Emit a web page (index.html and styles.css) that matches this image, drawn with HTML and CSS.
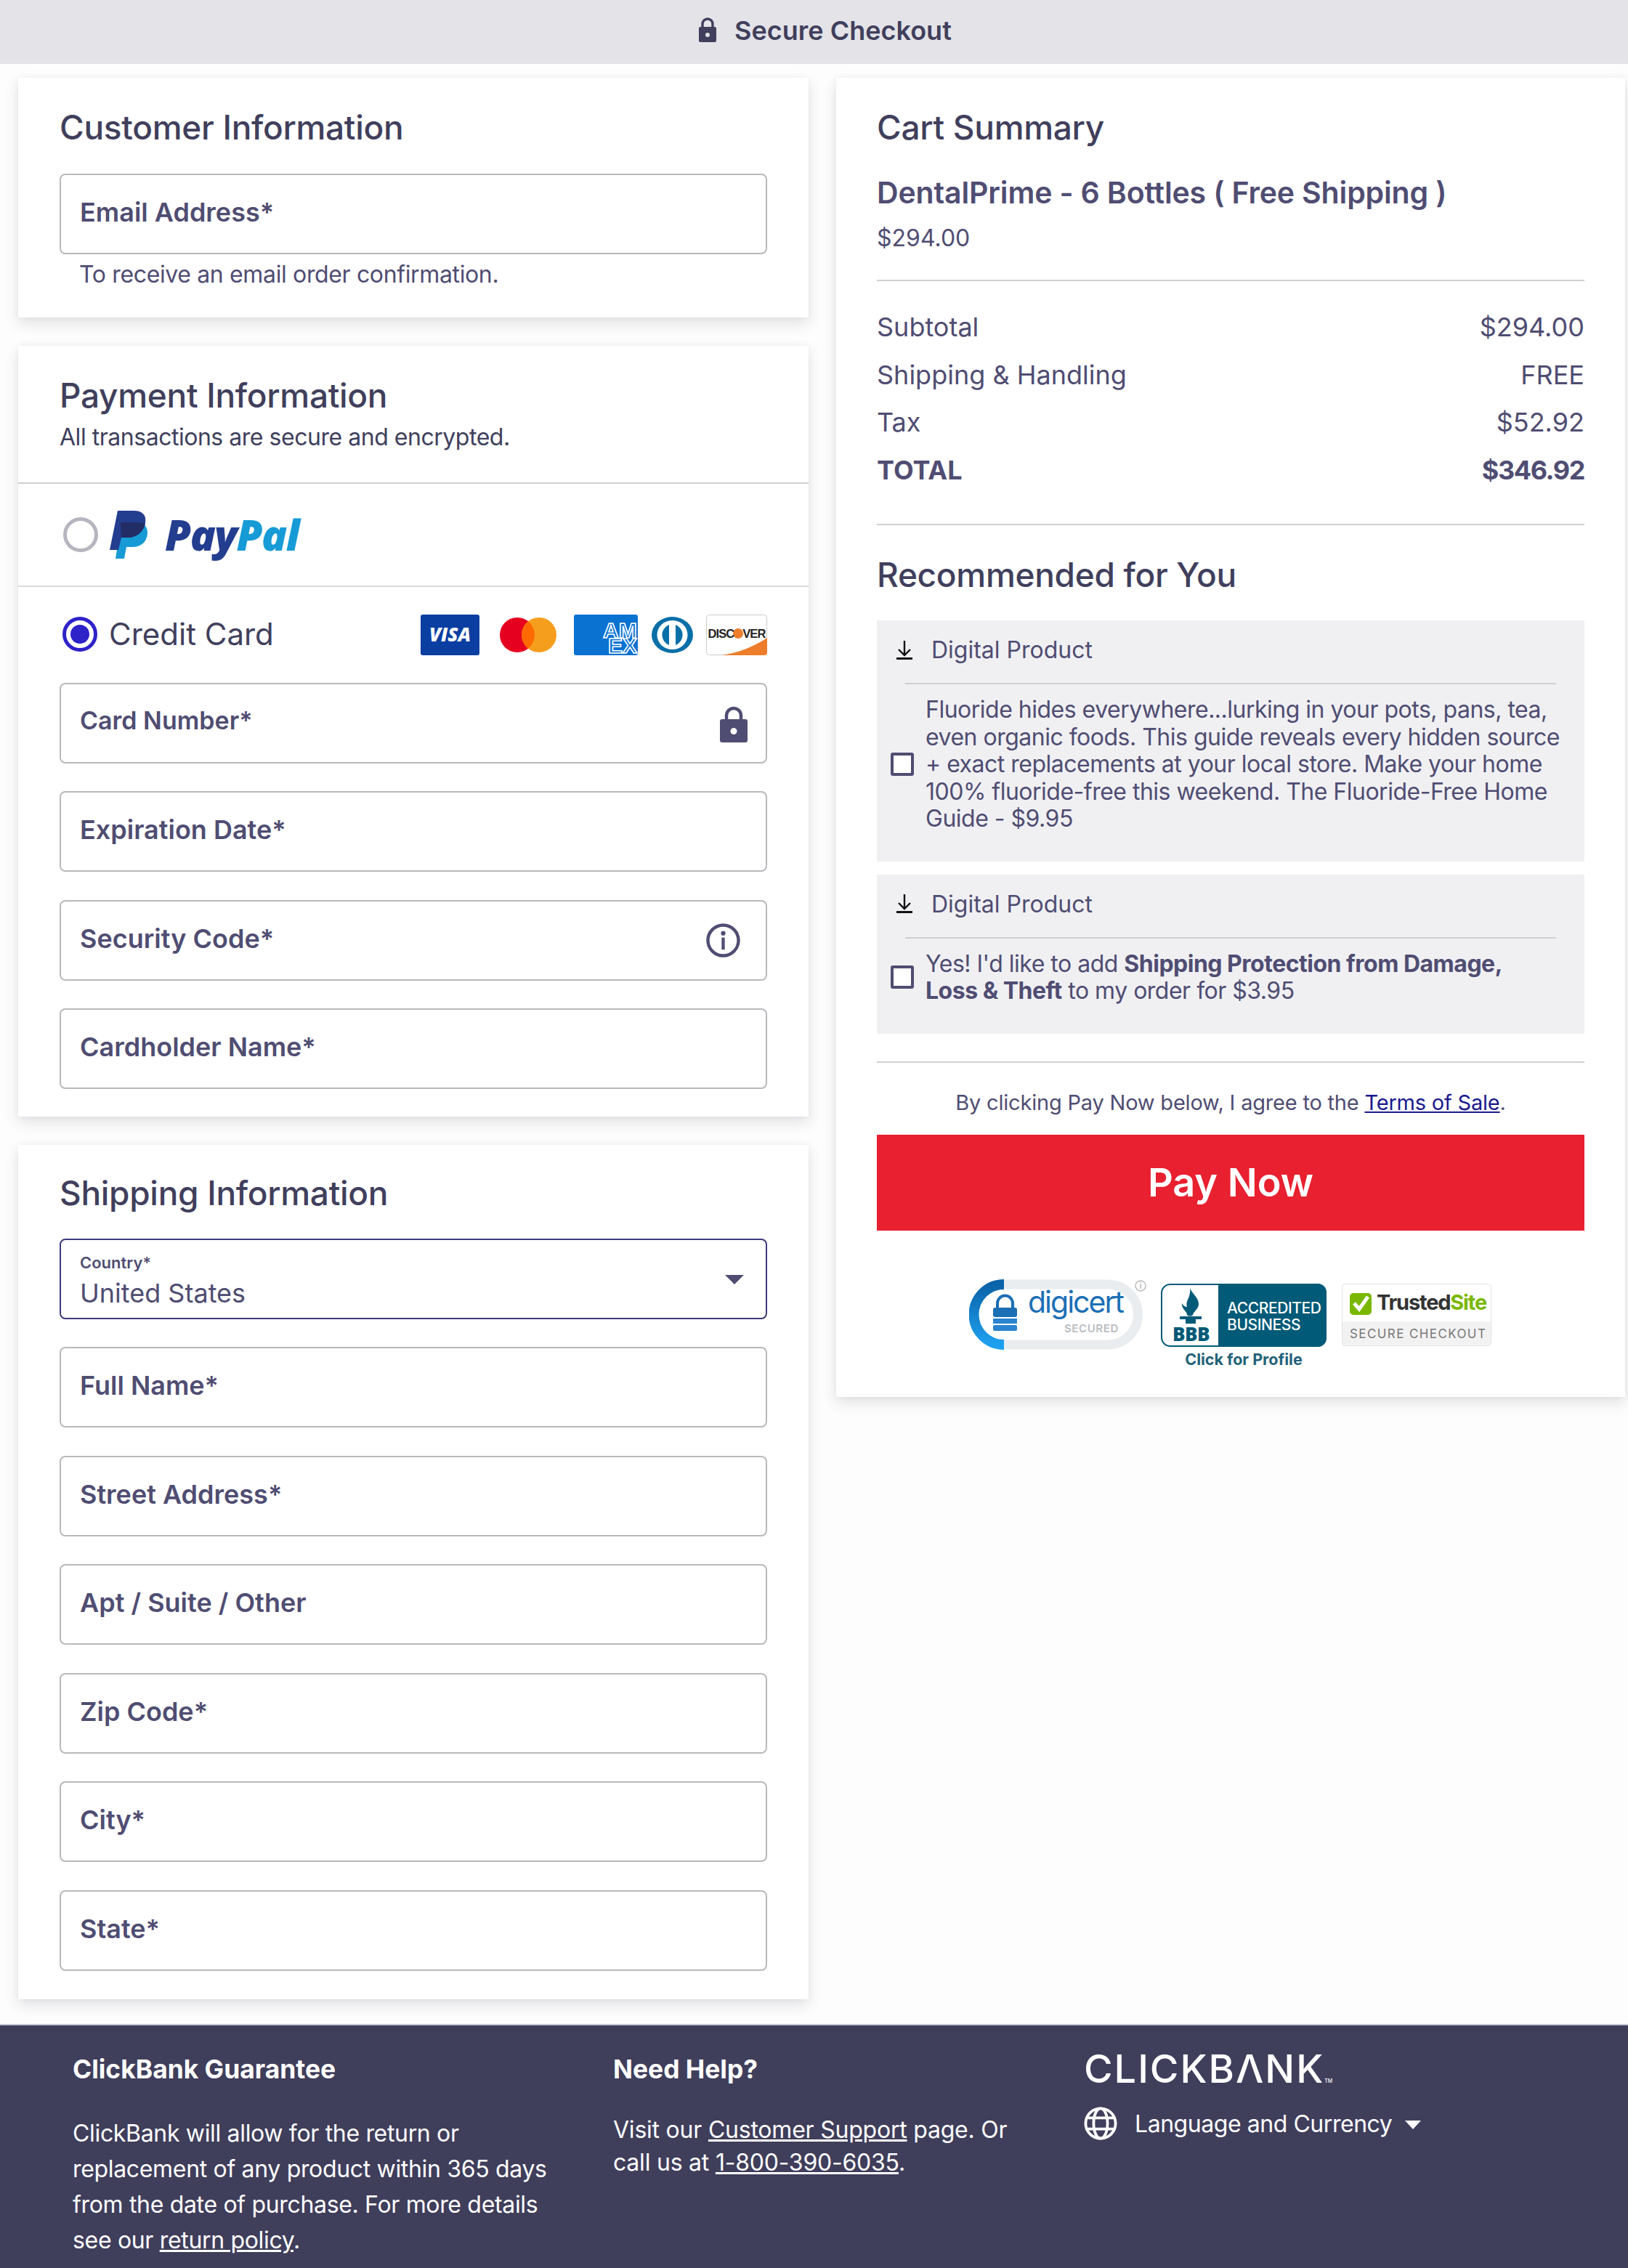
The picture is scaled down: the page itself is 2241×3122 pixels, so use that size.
FILE: index.html
```html
<!DOCTYPE html>
<html lang="en">
<head>
    <meta charset="UTF-8">
    <meta name="viewport" content="width=device-width, initial-scale=1.0">
    <title>Secure Checkout</title>
    <link rel="stylesheet" href="styles.css">
</head>
<body>
    <header class="topbar">
        <svg class="lock-small" viewBox="0 0 26 36"><path d="M6 14V9a7 7 0 0 1 14 0v5" fill="none" stroke="#403f5c" stroke-width="3.4"/><path fill-rule="evenodd" d="M3 13h20a2 2 0 0 1 2 2v17a2 2 0 0 1-2 2H3a2 2 0 0 1-2-2V15a2 2 0 0 1 2-2zm10 8a3 3 0 1 0 0 6 3 3 0 0 0 0-6z" fill="#403f5c"/></svg>
        <span>Secure Checkout</span>
    </header>

    <main class="page">
        <div class="left-col">
            <section class="card">
                <div class="card-pad">
                    <h2>Customer Information</h2>
                    <div class="field">Email Address*</div>
                    <p class="hint">To receive an email order confirmation.</p>
                </div>
            </section>

            <section class="card">
                <div class="payment-head">
                    <h2 class="flush">Payment Information</h2>
                    <p class="sub">All transactions are secure and encrypted.</p>
                </div>
                <div class="paypal-row">
                    <span class="radio"></span>
                    <svg class="pp-mark" viewBox="0 0 56 66">
                        <path d="M16 16h20c9 0 16 4 16 14 0 13-9 20-21 20h-8l-3 16H8z" fill="#179bd7"/>
                        <path d="M11 0h22c12 0 18 6 16 17-2 12-11 20-24 20h-9l-4 17H0z" fill="#233d8f"/>
                        <path d="M15 16h20c5 0 10 1 14 2-3 11-12 19-24 19h-9z" fill="#222d65"/>
                    </svg>
                    <span class="pp-word"><span class="pp-dark">Pay</span><span class="pp-light">Pal</span></span>
                </div>
                <div class="card-pad credit">
                    <div class="credit-row">
                        <span class="radio on"></span>
                        <span class="credit-label">Credit Card</span>
                        <div class="card-logos">
                            <svg width="81" height="56" viewBox="0 0 81 56"><rect width="81" height="56" rx="3" fill="#0a3ea0"/><text x="40.5" y="37" text-anchor="middle" class="logo-visa">VISA</text></svg>
                            <svg class="gap-mc" width="78" height="50" viewBox="0 0 78 50"><circle cx="24" cy="25" r="24" fill="#e6001f"/><circle cx="54" cy="25" r="24" fill="#f59e1e"/><path d="M39 6.300a24 24 0 0 1 0 37.400a24 24 0 0 1 0-37.400z" fill="#ff6a00"/></svg>
                            <svg class="gap-amex" width="88" height="56" viewBox="0 0 88 56"><rect width="88" height="56" rx="3" fill="#0a72d1"/><text x="40" y="32" class="logo-amex">AM</text><text x="47" y="53" class="logo-amex">EX</text></svg>
                            <svg class="gap-diners" width="57" height="50" viewBox="0 0 57 50"><ellipse cx="28.500" cy="25" rx="28.500" ry="25" fill="#0a6fa8"/><ellipse cx="28.500" cy="25" rx="21" ry="20" fill="#fff"/><path d="M24 11a15 15 0 0 0 0 28zM33 11a15 15 0 0 1 0 28z" fill="#0a6fa8"/></svg>
                            <svg class="gap-disc" width="84" height="56" viewBox="0 0 84 56"><rect x=".5" y=".5" width="83" height="55" rx="4" fill="#fff" stroke="#ccc"/><path d="M22 56c24-4 44-12 62-24v20a4 4 0 0 1-4 4z" fill="#ed7d2b"/><circle cx="44" cy="26" r="7" fill="#ed7d2b"/><text x="42" y="32" text-anchor="middle" class="logo-disc">DISC<tspan fill="none">O</tspan>VER</text></svg>
                        </div>
                    </div>
                    <div class="field-stack">
                        <div class="field card-number">Card Number*
                            <svg class="field-icon lock-big" viewBox="0 0 38 50"><path d="M9 20v-7a10 10 0 0 1 20 0v7" fill="none" stroke="#4f4d72" stroke-width="4.500"/><path fill-rule="evenodd" d="M3 18h32a3 3 0 0 1 3 3v26a3 3 0 0 1-3 3H3a3 3 0 0 1-3-3V21a3 3 0 0 1 3-3zm16 12a4.500 4.500 0 1 0 0 9 4.500 4.500 0 0 0 0-9z" fill="#4f4d72"/></svg>
                        </div>
                        <div class="field">Expiration Date*</div>
                        <div class="field">Security Code*
                            <svg class="field-icon info" viewBox="0 0 48 48"><circle cx="24" cy="24" r="21.500" fill="none" stroke="#4f4d72" stroke-width="4.500"/><circle cx="24" cy="14" r="3.200" fill="#4f4d72"/><rect x="21.800" y="20" width="4.400" height="17" fill="#4f4d72"/></svg>
                        </div>
                        <div class="field">Cardholder Name*</div>
                    </div>
                </div>
            </section>

            <section class="card">
                <div class="card-pad shipping">
                    <h2>Shipping Information</h2>
                    <div class="field-stack">
                        <div class="field select">
                            <span class="mini-label">Country*</span>
                            <span class="select-value">United States</span>
                            <span class="caret"></span>
                        </div>
                        <div class="field">Full Name*</div>
                        <div class="field">Street Address*</div>
                        <div class="field">Apt / Suite / Other</div>
                        <div class="field">Zip Code*</div>
                        <div class="field">City*</div>
                        <div class="field">State*</div>
                    </div>
                </div>
            </section>
        </div>

        <aside class="card summary">
            <h2 class="flush">Cart Summary</h2>
            <h3 class="product">DentalPrime - 6 Bottles ( Free Shipping )</h3>
            <p class="price">$294.00</p>
            <div class="totals">
                <div class="total-row"><span>Subtotal</span><span>$294.00</span></div>
                <div class="total-row"><span>Shipping &amp; Handling</span><span>FREE</span></div>
                <div class="total-row"><span>Tax</span><span>$52.92</span></div>
                <div class="total-row grand"><span>TOTAL</span><span class="grand-value">$346.92</span></div>
            </div>
            <h2 class="rec-title">Recommended for You</h2>

            <div class="offer">
                <div class="offer-head">
                    <svg class="dl" viewBox="0 0 24 28"><path d="M12 1v19M4 13l8 8 8-8" fill="none" stroke="#111" stroke-width="2.400"/><rect x="1" y="24" width="22" height="3" fill="#111"/></svg>
                    <span>Digital Product</span>
                </div>
                <div class="offer-body">
                    <span class="check"></span>
                    <p>Fluoride hides everywhere...lurking in your pots, pans, tea, even organic foods. This guide reveals every hidden source + exact replacements at your local store. Make your home 100% fluoride-free this weekend. The Fluoride-Free Home Guide - $9.95</p>
                </div>
            </div>
            <div class="offer">
                <div class="offer-head">
                    <svg class="dl" viewBox="0 0 24 28"><path d="M12 1v19M4 13l8 8 8-8" fill="none" stroke="#111" stroke-width="2.400"/><rect x="1" y="24" width="22" height="3" fill="#111"/></svg>
                    <span>Digital Product</span>
                </div>
                <div class="offer-body">
                    <span class="check"></span>
                    <p>Yes! I'd like to add <strong>Shipping Protection from Damage,<br>Loss &amp; Theft</strong> to my order for $3.95</p>
                </div>
            </div>

            <p class="terms">By clicking Pay Now below, I agree to the <a href="#">Terms of Sale</a>.</p>
            <button class="pay" type="button">Pay Now</button>

            <div class="badges">
                <svg class="badge-digi" width="245" height="97" viewBox="0 0 245 97">
                    <defs><linearGradient id="digiBlue" x1="0" y1="0" x2="0" y2="1"><stop offset="0" stop-color="#0a63a8"/><stop offset="1" stop-color="#1ea0f0"/></linearGradient></defs>
                    <path d="M48 7h143a41 41 0 0 1 0 83H48" fill="none" stroke="#e9edf0" stroke-width="13"/>
                    <path d="M48 7a41 41 0 0 0 0 83" fill="none" stroke="url(#digiBlue)" stroke-width="14"/>
                    <path d="M39 40V33a10.500 10.500 0 0 1 21 0v7" fill="none" stroke="#1b6fb5" stroke-width="4"/>
                    <rect x="33" y="39" width="33" height="13" rx="3" fill="#1b6fb5"/>
                    <rect x="33" y="54" width="33" height="7" fill="#2a84cf"/>
                    <rect x="33" y="63" width="33" height="8" rx="2" fill="#2a84cf"/>
                    <text x="81" y="46" class="digi-word">digicert</text>
                    <text x="131" y="73" class="digi-sec">SECURED</text>
                    <circle cx="236" cy="9" r="7" fill="#fff" stroke="#bbb" stroke-width="1.500"/>
                    <text x="236" y="13" text-anchor="middle" class="digi-i">i</text>
                </svg>
                <div class="badge-bbb">
                    <svg width="228" height="87" viewBox="0 0 228 87">
                        <rect x="1" y="1" width="226" height="85" rx="12" fill="#fff" stroke="#005a78" stroke-width="2"/>
                        <path d="M79 0h137a12 12 0 0 1 12 12v63a12 12 0 0 1-12 12H79z" fill="#005a78"/>
                        <path d="M40 6c3 8 12 13 12 22 0 7-7 10-8 15-2 2-6 2-8 0 0-5-8-8-7-16 2 4 5 5 7 5-3-8 6-14 4-26z" fill="#005a78"/>
                        <path d="M26 45h30v4h-8v6H34v-6h-8z" fill="#005a78"/>
                        <text x="16" y="79" class="bbb-mark">BBB</text>
                        <text x="91" y="41" class="bbb-text">ACCREDITED</text>
                        <text x="91" y="64" class="bbb-text">BUSINESS</text>
                    </svg>
                    <span class="bbb-link">Click for Profile</span>
                </div>
                <svg class="badge-trust" width="206" height="86" viewBox="0 0 206 86">
                    <rect x=".5" y=".5" width="205" height="85" rx="4" fill="#fff" stroke="#e3e3e3"/>
                    <path d="M1 52h204v29a4 4 0 0 1-4 4H5a4 4 0 0 1-4-4z" fill="#f2f2f2"/>
                    <rect x="11" y="13" width="30" height="30" rx="5" fill="#7ab800"/>
                    <path d="M17 27l7 8 12-17" fill="none" stroke="#fff" stroke-width="5"/>
                    <text x="48" y="36" class="ts-word">Trusted<tspan fill="#7ab800">Site</tspan></text>
                    <text x="11" y="75" class="ts-sub">SECURE CHECKOUT</text>
                </svg>
            </div>
        </aside>
    </main>

    <footer class="footer">
        <div class="foot-col guarantee">
            <h4>ClickBank Guarantee</h4>
            <p>ClickBank will allow for the return or replacement of any product within 365 days from the date of purchase. For more details see our <a href="#">return policy</a>.</p>
        </div>
        <div class="foot-col help">
            <h4>Need Help?</h4>
            <p>Visit our <a href="#">Customer Support</a> page. Or call us at <a href="#">1-800-390-6035</a>.</p>
        </div>
        <div class="foot-col brand">
            <div class="cb-logo">CLICKBΛNK<small>TM</small></div>
            <div class="lang">
                <svg class="globe" viewBox="0 0 48 48" fill="none" stroke="#fff" stroke-width="4"><circle cx="24" cy="24" r="21.500"/><ellipse cx="24" cy="24" rx="10" ry="21.500"/><path d="M5 16h38M5 32h38"/></svg>
                <span>Language and Currency</span>
                <span class="lang-caret"></span>
            </div>
        </div>
    </footer>
</body>
</html>
```

FILE: styles.css
```css
* {
    box-sizing: border-box;
}
body {
    font-family: Inter, "Open Sans", sans-serif;
    margin: 0;
    background-color: #fdfdfd;
    color: #4f4d72;
    width: 2241px;
    height: 3122px;
    overflow: hidden;
}
h2, h3, h4, p {
    margin: 0;
}
.topbar {
    height: 88px;
    background: #e3e3e8;
    display: flex;
    align-items: center;
    justify-content: center;
    gap: 24px;
    padding: 0 0 4px 30px;
    font-size: 36px;
    font-weight: 600;
    color: #403f5c;
}
.lock-small {
    width: 26px;
    height: 36px;
}
.page {
    height: 2698px;
    padding: 19px 4px 0 25px;
    display: grid;
    grid-template-columns: 1088px 1086px;
    gap: 38px;
    align-items: start;
}
.left-col {
    display: flex;
    flex-direction: column;
    gap: 38.5px;
}
.card {
    background: #fff;
    box-shadow: 0 8px 18px rgba(60, 60, 80, 0.14), 0 0 8px rgba(60, 60, 80, 0.04);
}
.card-pad {
    padding: 40px 57px 39px;
}
h2 {
    font-size: 46px;
    line-height: 56px;
    font-weight: 500;
    color: #403f5c;
    letter-spacing: -0.3px;
    margin-bottom: 36px;
}
h2.flush {
    margin-bottom: 0;
}
.field {
    position: relative;
    height: 111px;
    border: 2px solid #b9b9bd;
    border-radius: 8px;
    padding: 0 26px;
    display: flex;
    align-items: center;
    padding-bottom: 5px;
    font-size: 36px;
    font-weight: 600;
    color: #4f4d72;
}
.field.card-number {
    font-size: 34px;
    padding-bottom: 8px;
}
.field-stack {
    display: flex;
    flex-direction: column;
    gap: 38.5px;
}
.hint {
    font-size: 32px;
    line-height: 40px;
    letter-spacing: -0.36px;
    padding-left: 27px;
    margin-top: 8px;
}
.payment-head {
    padding: 40px 57px 42px;
    border-bottom: 2px solid #d0d0d4;
}
.sub {
    font-size: 32px;
    line-height: 40px;
    letter-spacing: -0.47px;
    margin-top: 10px;
    color: #403f5c;
}
.paypal-row {
    height: 142px;
    display: flex;
    align-items: center;
    padding-left: 62px;
    border-bottom: 2px solid #d9d9dc;
}
.radio {
    width: 48px;
    height: 48px;
    border-radius: 50%;
    border: 5px solid #b6b5bf;
    flex: none;
}
.radio.on {
    border-color: #2e22c9;
    position: relative;
}
.radio.on::after {
    content: "";
    position: absolute;
    inset: 6px;
    border-radius: 50%;
    background: #2e22c9;
}
.pp-mark {
    width: 56px;
    height: 66px;
    margin-left: 16px;
}
.pp-word {
    font-family: "Open Sans", sans-serif;
    font-style: italic;
    font-weight: 800;
    font-size: 58px;
    letter-spacing: -1.5px;
    margin-left: 20px;
}
.pp-dark {
    color: #233d8f;
}
.pp-light {
    color: #179bd7;
}
.credit {
    padding-top: 38px;
    padding-bottom: 38px;
}
.credit-row {
    height: 56px;
    margin-bottom: 38px;
    display: flex;
    align-items: center;
    padding: 0 0 2px 4px;
}
.credit-label {
    font-size: 42px;
    font-weight: 400;
    color: #403f5c;
    margin-left: 16px;
}
.card-logos {
    margin-left: auto;
    display: flex;
    align-items: center;
    margin-top: 2px;
}
.gap-mc {
    margin-left: 28px;
}
.gap-amex {
    margin-left: 24px;
    overflow: visible;
}
.gap-diners {
    margin-left: 19px;
}
.gap-disc {
    margin-left: 18px;
}
.logo-visa {
    font: italic 800 26px "Open Sans", sans-serif;
    fill: #fff;
}
.logo-amex {
    font: 800 30px "Liberation Sans", sans-serif;
    fill: #0a72d1;
    stroke: #fff;
    stroke-width: 1.6;
}
.logo-disc {
    font: 700 16.5px "Liberation Sans", sans-serif;
    letter-spacing: -0.9px;
    fill: #222;
}
.field-icon {
    position: absolute;
}
.lock-big {
    right: 25px;
    top: 30px;
    width: 38px;
    height: 50px;
}
.info {
    right: 35px;
    top: 30px;
    width: 47px;
    height: 47px;
}
.shipping {
    padding-top: 38px;
}
.shipping h2 {
    margin-bottom: 35px;
}
.select {
    display: block;
    border: 2px solid #3d3a7d;
    padding-top: 18px;
    padding-bottom: 0;
    font-weight: 400;
}
.mini-label {
    display: block;
    font-size: 22px;
    line-height: 26px;
    font-weight: 600;
}
.select-value {
    display: block;
    font-size: 36px;
    line-height: 46px;
    margin-top: 6px;
}
.caret {
    position: absolute;
    right: 30px;
    top: 48px;
    border-left: 13px solid transparent;
    border-right: 13px solid transparent;
    border-top: 13px solid #4f4d72;
}
.summary {
    padding: 40px 56px 0;
    height: 1816px;
}
.product {
    font-size: 41px;
    line-height: 50px;
    font-weight: 600;
    letter-spacing: -0.15px;
    color: #4f4d72;
    margin-top: 37px;
}
.price {
    font-size: 32px;
    line-height: 40px;
    margin-top: 18px;
    padding-bottom: 37px;
    border-bottom: 2px solid #d0d0d4;
}
.totals {
    padding: 31px 0 41px;
    border-bottom: 2px solid #d0d0d4;
}
.total-row {
    display: flex;
    justify-content: space-between;
    font-size: 36px;
    line-height: 65.5px;
}
.total-row.grand {
    font-weight: 700;
}
.grand-value {
    letter-spacing: -1.4px;
}
h2.rec-title {
    margin-top: 40px;
    margin-bottom: 35px;
}
.offer {
    background: #f0f0f3;
    margin-bottom: 18px;
    padding-bottom: 40px;
}
.offer-head {
    height: 86px;
    display: flex;
    align-items: center;
    gap: 25px;
    padding: 0 0 5px 26px;
    font-size: 32px;
}
.dl {
    width: 24px;
    height: 28px;
}
.offer-body {
    margin: 0 39px;
    border-top: 2px solid #cfcfd3;
    display: flex;
    align-items: center;
    padding-top: 16px;
    position: relative;
}
.offer-body p {
    margin: 0 -8px 0 16px;
    font-size: 32px;
    line-height: 37.5px;
    letter-spacing: -0.5px;
}
.check {
    flex: none;
    width: 32px;
    height: 32px;
    border: 4px solid #4f4d72;
    border-radius: 3px;
    margin-left: -20px;
    background: #fff;
}
.offer + .offer {
    margin-bottom: 0;
}
.terms {
    margin-top: 38px;
    border-top: 2px solid #d0d0d4;
    padding-top: 37px;
    text-align: center;
    font-size: 29px;
    line-height: 36px;
    letter-spacing: -0.2px;
}
.terms a {
    color: #1a1a8c;
}
.pay {
    display: block;
    width: 100%;
    height: 132px;
    margin-top: 26px;
    border: none;
    background: #e8202f;
    color: #fff;
    font-family: inherit;
    font-size: 54px;
    font-weight: 600;
}
.badges {
    margin-top: 67px;
    display: flex;
    align-items: flex-start;
    padding-left: 127px;
}
.badge-bbb {
    margin: 6px 0 0 19px;
    display: flex;
    flex-direction: column;
    align-items: center;
}
.badge-trust {
    margin: 6px 0 0 21px;
}
.bbb-link {
    font-size: 21.5px;
    line-height: 26px;
    margin-top: 4px;
    font-weight: 700;
    color: #1f6279;
}
.bbb-text {
    font: 500 21px "Inter", sans-serif;
    letter-spacing: -0.4px;
    fill: #fff;
}
.bbb-mark {
    font: 800 26px "Open Sans", sans-serif;
    letter-spacing: -0.5px;
    fill: #005a78;
}
.digi-word {
    font: 400 41px "Inter", sans-serif;
    letter-spacing: -2px;
    fill: #1b6fb5;
}
.digi-sec {
    font: 600 15px "Inter", sans-serif;
    letter-spacing: 0.6px;
    fill: #b8bdc2;
}
.digi-i {
    font: 400 11px "Inter", sans-serif;
    fill: #999;
}
.ts-word {
    font: 700 29px "Inter", sans-serif;
    letter-spacing: -1.2px;
    fill: #333;
}
.ts-sub {
    font: 400 17px "Inter", sans-serif;
    letter-spacing: 1.4px;
    fill: #777;
}
.footer {
    height: 336px;
    background: #3f3e5b;
    border-top: 2px solid #c8c8d2;
    position: relative;
    display: grid;
    grid-template-columns: 744px 648px 1fr;
    padding: 0 0 0 100px;
    color: #fff;
}
.foot-col h4 {
    font-size: 35.4px;
    font-weight: 700;
    line-height: 44px;
    margin-top: 39px;
}
.foot-col a {
    color: #fff;
}
.guarantee p {
    font-size: 32px;
    line-height: 49px;
    letter-spacing: -0.33px;
    margin-top: 41px;
    width: 700px;
}
.help p {
    font-size: 32px;
    line-height: 45px;
    letter-spacing: -0.22px;
    margin-top: 38px;
    width: 580px;
}
.cb-logo {
    font-size: 54px;
    line-height: 54px;
    letter-spacing: 2px;
    margin-top: 33px;
    font-weight: 500;
}
.cb-logo small {
    font-size: 7px;
    letter-spacing: 0;
}
.lang {
    display: flex;
    align-items: center;
    margin-top: 8px;
    font-size: 32px;
    letter-spacing: -0.45px;
}
.globe {
    width: 46px;
    height: 46px;
    margin-right: 24px;
}
.lang-caret {
    margin-left: 18px;
    margin-top: 4px;
    border-left: 11px solid transparent;
    border-right: 11px solid transparent;
    border-top: 12px solid #fff;
}
```
